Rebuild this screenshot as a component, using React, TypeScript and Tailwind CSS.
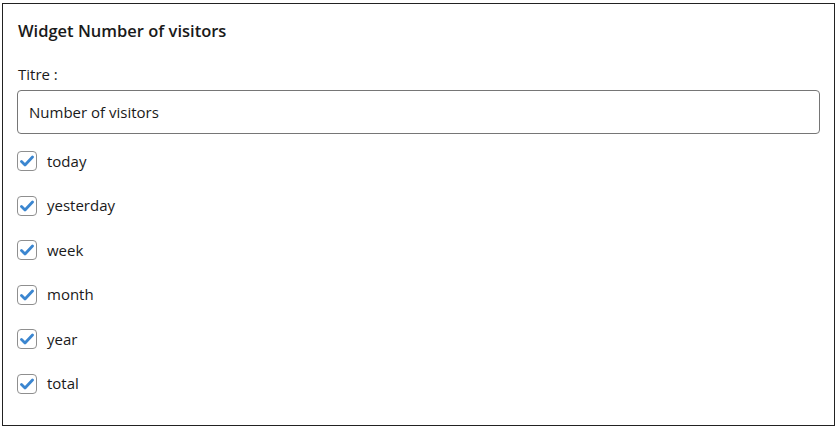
import { useState } from "react";

const periods = ["today", "yesterday", "week", "month", "year", "total"];

function Check({ checked, onToggle }: { checked: boolean; onToggle: () => void }) {
  return (
    <button
      type="button"
      onClick={onToggle}
      className="flex h-[20px] w-[20px] shrink-0 items-center justify-center rounded-[4px] border border-[#8f8f8f] bg-white"
    >
      {checked && (
        <svg width="14" height="12" viewBox="0 0 14 12">
          <path d="M1.5 6.5 L5 10 L12.5 2" fill="none" stroke="#3b86d0" strokeWidth="2.8" strokeLinecap="round" strokeLinejoin="round" />
        </svg>
      )}
    </button>
  );
}

export default function App() {
  const [title, setTitle] = useState("Number of visitors");
  const [checked, setChecked] = useState<Record<string, boolean>>(
    Object.fromEntries(periods.map((p) => [p, true]))
  );

  return (
    <div className="h-[433px] w-[839px] bg-white pl-[2px] pt-[3px] font-['Open_Sans',sans-serif] text-[#1a1a1a]">
      <div className="h-[423px] w-[833px] border border-[#222] px-[14px] pt-[16px]">
        <h3 className="pl-[1px] text-[16.5px] font-semibold leading-[22px]">Widget Number of visitors</h3>
        <label className="mt-[22px] block pl-[1px] text-[15px] leading-[20px]">Titre :</label>
        <input
          autoFocus
          value={title}
          onChange={(e) => setTitle(e.target.value)}
          className="mt-[6px] block h-[44px] w-[803px] rounded-[4px] border border-[#767676] px-[11px] text-[15px] caret-black outline-none"
        />
        <div className="mt-[17px] flex flex-col gap-[24.5px]">
          {periods.map((p) => (
            <label key={p} className="flex h-[20px] items-center gap-[10px] text-[15px]">
              <Check checked={checked[p]} onToggle={() => setChecked((c) => ({ ...c, [p]: !c[p] }))} />
              <span>{p}</span>
            </label>
          ))}
        </div>
      </div>
    </div>
  );
}
